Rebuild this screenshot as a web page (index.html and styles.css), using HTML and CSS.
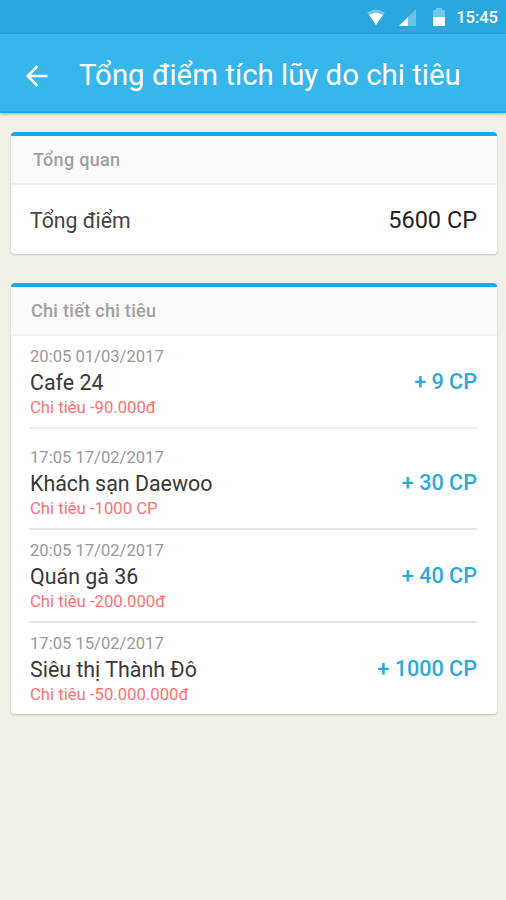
FILE: index.html
```html
<!DOCTYPE html>
<html lang="vi">
  <head>
    <meta charset="UTF-8" />
    <title>Tổng điểm tích lũy do chi tiêu</title>
    <link rel="stylesheet" href="styles.css">
  </head>

  <body>
    <div class="status-bar">
      <svg class="wifi" width="18" height="16" viewBox="0 0 19 17">
        <path d="M0 4 Q9.500 -3 19 4 L9.500 17 Z" fill="#fff" opacity="0.35" />
        <path d="M2.200 6.500 Q9.500 1.500 16.800 6.500 L9.500 17 Z" fill="#fff" />
      </svg>
      <svg class="signal" width="17" height="17" viewBox="0 0 17 17">
        <path d="M17 0 V17 H0 Z" fill="#fff" opacity="0.3" />
        <path d="M9 8 V17 H0 Z" fill="#fff" />
      </svg>
      <svg class="battery" width="12" height="18" viewBox="0 0 12 18">
        <path d="M3 0 H9 V2 H11 Q12 2 12 3 V9 H0 V3 Q0 2 1 2 H3 Z" fill="#fff" opacity="0.35" />
        <path d="M0 9 H12 V17 Q12 18 11 18 H1 Q0 18 0 17 Z" fill="#fff" />
      </svg>
      <span class="clock">15:45</span>
    </div>
    <header class="app-bar">
      <svg class="back" width="22" height="22" viewBox="0 0 22 22">
        <path d="M21.500 11 H2 M11.500 1.200 L1.700 11 L11.500 20.800" fill="none" stroke="#fff" stroke-width="2.600" />
      </svg>
      <h1>Tổng điểm tích lũy do chi tiêu</h1>
    </header>

    <div class="card overview">
      <h2>Tổng quan</h2>
      <div class="total">
        <span class="label">Tổng điểm</span>
        <span class="value">5600 CP</span>
      </div>
    </div>

    <div class="card details">
      <h2>Chi tiết chi tiêu</h2>
      <ul>
        <li class="first">
          <div class="info">
            <p class="date">20:05 01/03/2017</p>
            <p class="name">Cafe 24</p>
            <p class="spent">Chi tiêu -90.000đ</p>
          </div>
          <span class="point">+ 9 CP</span>
        </li>
        <li class="spaced">
          <div class="info">
            <p class="date">17:05 17/02/2017</p>
            <p class="name">Khách sạn Daewoo</p>
            <p class="spent">Chi tiêu -1000 CP</p>
          </div>
          <span class="point">+ 30 CP</span>
        </li>
        <li>
          <div class="info">
            <p class="date">20:05 17/02/2017</p>
            <p class="name">Quán gà 36</p>
            <p class="spent">Chi tiêu -200.000đ</p>
          </div>
          <span class="point">+ 40 CP</span>
        </li>
        <li class="last">
          <div class="info">
            <p class="date">17:05 15/02/2017</p>
            <p class="name">Siêu thị Thành Đô</p>
            <p class="spent">Chi tiêu -50.000.000đ</p>
          </div>
          <span class="point">+ 1000 CP</span>
        </li>
      </ul>
    </div>
  </body>
</html>
```
FILE: styles.css
```css
* {
  box-sizing: border-box;
}

body {
  margin: 0;
  min-height: 900px;
  background-color: #f2efe6;
  font-family: Roboto, sans-serif;
}

h1,
h2,
p,
ul {
  margin: 0;
  padding: 0;
}

.status-bar {
  display: flex;
  align-items: center;
  justify-content: flex-end;
  height: 34px;
  padding-right: 8px;
  background-color: #2aa8dd;
  color: #fff;
}

.wifi {
  margin-right: 14px;
}

.signal {
  margin-right: 17px;
}

.battery {
  margin-right: 11px;
}

.clock {
  font-size: 16.5px;
  font-weight: 500;
  line-height: 34px;
  padding-top: 1px;
}

.app-bar {
  display: flex;
  align-items: center;
  height: 79px;
  padding: 7px 0 0 26px;
  background-color: #36b6ea;
  border-bottom: 2px solid #1fabe3;
  box-shadow: 0 1px 3px rgba(0, 0, 0, 0.3);
  color: #fff;
}

.app-bar h1 {
  margin-left: 31px;
  padding-bottom: 1px;
  font-size: 29.4px;
  font-weight: 400;
  line-height: 39px;
  white-space: nowrap;
}

.card {
  margin: 0 9px 0 11px;
  background-color: #fff;
  border-top: 4px solid #1cabe0;
  border-radius: 4px;
  box-shadow: 0 1px 2px rgba(0, 0, 0, 0.2);
}

.card h2 {
  height: 49px;
  background-color: #fafafa;
  border-bottom: 2px solid #f0f0f0;
  color: #a0a0a0;
  font-size: 18px;
  font-weight: 500;
  letter-spacing: 0.3px;
  line-height: 48px;
}

.overview {
  height: 122px;
  margin-top: 19px;
}

.overview h2 {
  padding-left: 22px;
}

.total {
  display: flex;
  align-items: center;
  justify-content: space-between;
  height: 69px;
  padding: 2px 20px 0 19px;
}

.label {
  color: #444;
  font-size: 21.3px;
}

.value {
  padding-bottom: 1px;
  color: #222;
  font-size: 23.5px;
}

.details {
  height: 431px;
  margin-top: 29px;
}

.details h2 {
  padding-left: 20px;
}

.details ul {
  padding: 0 20px 0 18px;
  list-style: none;
}

.details li {
  display: flex;
  align-items: center;
  justify-content: space-between;
  padding: 8px 0 7px 1px;
  border-bottom: 2px solid #e6e6e6;
}

.details li.first {
  border-bottom-color: #eee;
}

.details li.spaced {
  padding-top: 16px;
}

.details li.last {
  border-bottom: none;
}

.details p {
  line-height: 25px;
}

.details .date {
  color: #999;
  font-size: 16.6px;
  line-height: 26px;
}

.name {
  color: #383838;
  font-size: 21.4px;
}

.spent {
  color: #ff7171;
  font-size: 16.7px;
}

.point {
  color: #2aaadc;
  font-size: 21.6px;
  font-weight: 500;
  line-height: 24px;
}
```
